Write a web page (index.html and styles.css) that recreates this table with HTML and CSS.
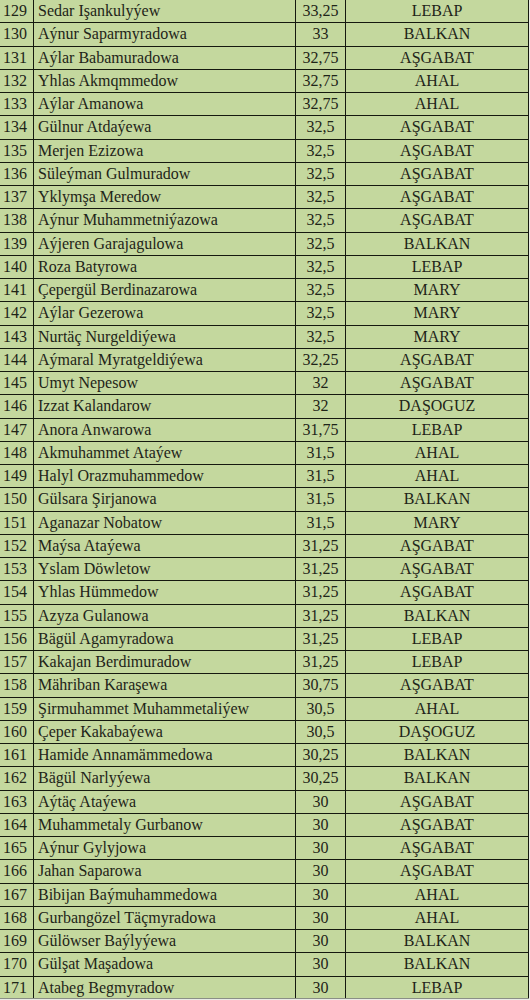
FILE: index.html
```html
<!DOCTYPE html>
<html lang="tk">
<head>
<meta charset="utf-8">
<title>Netijeler</title>
<link rel="stylesheet" href="styles.css">
</head>
<body>
<main class="sheet">
<div class="row"><span class="n">129</span><span class="name">Sedar Işankulyýew</span><span class="score">33,25</span><span class="reg">LEBAP</span></div>
<div class="row"><span class="n">130</span><span class="name">Aýnur Saparmyradowa</span><span class="score">33</span><span class="reg">BALKAN</span></div>
<div class="row"><span class="n">131</span><span class="name">Aýlar Babamuradowa</span><span class="score">32,75</span><span class="reg">AŞGABAT</span></div>
<div class="row"><span class="n">132</span><span class="name">Yhlas Akmqmmedow</span><span class="score">32,75</span><span class="reg">AHAL</span></div>
<div class="row"><span class="n">133</span><span class="name">Aýlar Amanowa</span><span class="score">32,75</span><span class="reg">AHAL</span></div>
<div class="row"><span class="n">134</span><span class="name">Gülnur Atdaýewa</span><span class="score">32,5</span><span class="reg">AŞGABAT</span></div>
<div class="row"><span class="n">135</span><span class="name">Merjen Ezizowa</span><span class="score">32,5</span><span class="reg">AŞGABAT</span></div>
<div class="row"><span class="n">136</span><span class="name">Süleýman Gulmuradow</span><span class="score">32,5</span><span class="reg">AŞGABAT</span></div>
<div class="row"><span class="n">137</span><span class="name">Yklymşa Meredow</span><span class="score">32,5</span><span class="reg">AŞGABAT</span></div>
<div class="row"><span class="n">138</span><span class="name">Aýnur Muhammetniýazowa</span><span class="score">32,5</span><span class="reg">AŞGABAT</span></div>
<div class="row"><span class="n">139</span><span class="name">Aýjeren Garajagulowa</span><span class="score">32,5</span><span class="reg">BALKAN</span></div>
<div class="row"><span class="n">140</span><span class="name">Roza Batyrowa</span><span class="score">32,5</span><span class="reg">LEBAP</span></div>
<div class="row"><span class="n">141</span><span class="name">Çepergül Berdinazarowa</span><span class="score">32,5</span><span class="reg">MARY</span></div>
<div class="row"><span class="n">142</span><span class="name">Aýlar Gezerowa</span><span class="score">32,5</span><span class="reg">MARY</span></div>
<div class="row"><span class="n">143</span><span class="name">Nurtäç Nurgeldiýewa</span><span class="score">32,5</span><span class="reg">MARY</span></div>
<div class="row"><span class="n">144</span><span class="name">Aýmaral Myratgeldiýewa</span><span class="score">32,25</span><span class="reg">AŞGABAT</span></div>
<div class="row"><span class="n">145</span><span class="name">Umyt Nepesow</span><span class="score">32</span><span class="reg">AŞGABAT</span></div>
<div class="row"><span class="n">146</span><span class="name">Izzat Kalandarow</span><span class="score">32</span><span class="reg">DAŞOGUZ</span></div>
<div class="row"><span class="n">147</span><span class="name">Anora Anwarowa</span><span class="score">31,75</span><span class="reg">LEBAP</span></div>
<div class="row"><span class="n">148</span><span class="name">Akmuhammet Ataýew</span><span class="score">31,5</span><span class="reg">AHAL</span></div>
<div class="row"><span class="n">149</span><span class="name">Halyl Orazmuhammedow</span><span class="score">31,5</span><span class="reg">AHAL</span></div>
<div class="row"><span class="n">150</span><span class="name">Gülsara Şirjanowa</span><span class="score">31,5</span><span class="reg">BALKAN</span></div>
<div class="row"><span class="n">151</span><span class="name">Aganazar Nobatow</span><span class="score">31,5</span><span class="reg">MARY</span></div>
<div class="row"><span class="n">152</span><span class="name">Maýsa Ataýewa</span><span class="score">31,25</span><span class="reg">AŞGABAT</span></div>
<div class="row"><span class="n">153</span><span class="name">Yslam Döwletow</span><span class="score">31,25</span><span class="reg">AŞGABAT</span></div>
<div class="row"><span class="n">154</span><span class="name">Yhlas Hümmedow</span><span class="score">31,25</span><span class="reg">AŞGABAT</span></div>
<div class="row"><span class="n">155</span><span class="name">Azyza Gulanowa</span><span class="score">31,25</span><span class="reg">BALKAN</span></div>
<div class="row"><span class="n">156</span><span class="name">Bägül Agamyradowa</span><span class="score">31,25</span><span class="reg">LEBAP</span></div>
<div class="row"><span class="n">157</span><span class="name">Kakajan Berdimuradow</span><span class="score">31,25</span><span class="reg">LEBAP</span></div>
<div class="row"><span class="n">158</span><span class="name">Mähriban Karaşewa</span><span class="score">30,75</span><span class="reg">AŞGABAT</span></div>
<div class="row"><span class="n">159</span><span class="name">Şirmuhammet Muhammetaliýew</span><span class="score">30,5</span><span class="reg">AHAL</span></div>
<div class="row"><span class="n">160</span><span class="name">Çeper Kakabaýewa</span><span class="score">30,5</span><span class="reg">DAŞOGUZ</span></div>
<div class="row"><span class="n">161</span><span class="name">Hamide Annamämmedowa</span><span class="score">30,25</span><span class="reg">BALKAN</span></div>
<div class="row"><span class="n">162</span><span class="name">Bägül Narlyýewa</span><span class="score">30,25</span><span class="reg">BALKAN</span></div>
<div class="row"><span class="n">163</span><span class="name">Aýtäç Ataýewa</span><span class="score">30</span><span class="reg">AŞGABAT</span></div>
<div class="row"><span class="n">164</span><span class="name">Muhammetaly Gurbanow</span><span class="score">30</span><span class="reg">AŞGABAT</span></div>
<div class="row"><span class="n">165</span><span class="name">Aýnur Gylyjowa</span><span class="score">30</span><span class="reg">AŞGABAT</span></div>
<div class="row"><span class="n">166</span><span class="name">Jahan Saparowa</span><span class="score">30</span><span class="reg">AŞGABAT</span></div>
<div class="row"><span class="n">167</span><span class="name">Bibijan Baýmuhammedowa</span><span class="score">30</span><span class="reg">AHAL</span></div>
<div class="row"><span class="n">168</span><span class="name">Gurbangözel Täçmyradowa</span><span class="score">30</span><span class="reg">AHAL</span></div>
<div class="row"><span class="n">169</span><span class="name">Gülöwser Baýlyýewa</span><span class="score">30</span><span class="reg">BALKAN</span></div>
<div class="row"><span class="n">170</span><span class="name">Gülşat Maşadowa</span><span class="score">30</span><span class="reg">BALKAN</span></div>
<div class="row"><span class="n">171</span><span class="name">Atabeg Begmyradow</span><span class="score">30</span><span class="reg">LEBAP</span></div>
</main>
</body>
</html>
```
FILE: styles.css
```css
body {
  margin: 0;
  background: #e9ebe6;
  font-family: "Liberation Serif", "Times New Roman", serif;
  font-size: 16px;
  color: #1e2418;
}
.sheet {
  display: flex;
  flex-direction: column;
  width: 529px;
  height: 998px;
  background: #c4d89e;
  border-bottom: 1px solid #8a8f86;
  overflow: hidden;
}
.row {
  display: grid;
  grid-template-columns: 34px 262px 50px 183px;
  flex: 0 0 23.25px;
  box-sizing: border-box;
  border-bottom: 1px solid #15190f;
  line-height: 22px;
}
.row > span {
  box-sizing: border-box;
  border-right: 1px solid #15190f;
  white-space: nowrap;
  font-family: "Liberation Serif", "Times New Roman", serif;
}
.n {
  text-align: right;
  padding-right: 6px;
}
.name {
  padding-left: 4px;
}
.score {
  text-align: center;
}
.reg {
  text-align: center;
}
```
